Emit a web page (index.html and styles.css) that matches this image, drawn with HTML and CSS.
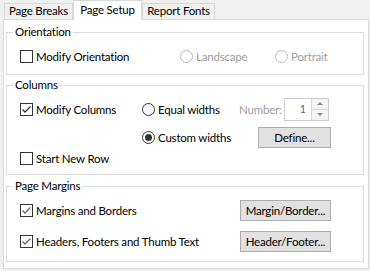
FILE: index.html
```html
<!DOCTYPE html>
<html>
<head>
    <title>Page Setup</title>
    <link rel="stylesheet" href="styles.css">
</head>
<body>
    <div class="tabs">
        <div class="tab tab-breaks">Page Breaks</div>
        <div class="tab tab-active">Page Setup</div>
        <div class="tab tab-fonts">Report Fonts</div>
    </div>
    <div class="panel">
        <div class="group group-orient">
            <div class="group-title">Orientation</div>
            <div class="row">
                <label class="opt w-orient"><span class="box"></span>Modify Orientation</label>
                <label class="opt w-land disabled"><span class="radio"></span>Landscape</label>
                <label class="opt disabled"><span class="radio"></span>Portrait</label>
            </div>
        </div>

        <div class="group group-cols">
            <div class="group-title">Columns</div>
            <div class="row">
                <label class="opt w-cols"><span class="box checked"><svg width="11" height="11" viewBox="0 0 11 11"><path d="M1.5 5.5 L4 8 L9.5 2.5" /></svg></span>Modify Columns</label>
                <label class="opt w-equal"><span class="radio"></span>Equal widths</label>
                <span class="num-label">Number:</span>
                <div class="spin">
                    <span class="spin-val">1</span>
                    <span class="spin-btns">
                        <span class="spin-up"></span>
                        <span class="spin-down"></span>
                    </span>
                </div>
            </div>
            <div class="row row-custom">
                <label class="opt w-custom"><span class="radio selected"></span>Custom widths</label>
                <button class="btn btn-define">Define...</button>
            </div>
            <div class="row row-short">
                <label class="opt"><span class="box"></span>Start New Row</label>
            </div>
        </div>

        <div class="group group-margins">
            <div class="group-title">Page Margins</div>
            <div class="row">
                <label class="opt w-margin"><span class="box checked light"><svg width="11" height="11" viewBox="0 0 11 11"><path d="M1.5 5.5 L4 8 L9.5 2.5" /></svg></span>Margins and Borders</label>
                <button class="btn btn-wide">Margin/Border...</button>
            </div>
            <div class="row row-second">
                <label class="opt w-margin"><span class="box checked light"><svg width="11" height="11" viewBox="0 0 11 11"><path d="M1.5 5.5 L4 8 L9.5 2.5" /></svg></span>Headers, Footers and Thumb Text</label>
                <button class="btn btn-wide">Header/Footer...</button>
            </div>
        </div>
    </div>
</body>
</html>
```

FILE: styles.css
```css
/* window frame */
body {
    margin: 0;
    width: 370px;
    height: 271px;
    background: #f0f0f0;
    font-family: Lato, "Noto Sans", sans-serif;
    font-size: 11.5px;
    letter-spacing: -0.2px;
    color: #000;
    overflow: hidden;
}

/* tab strip */
.tabs {
    display: flex;
    align-items: flex-end;
    height: 20px;
    padding-left: 4px;
    position: relative;
    z-index: 1;
    white-space: nowrap;
}

.tab {
    box-sizing: border-box;
    height: 16px;
    line-height: 14px;
    border: 1px solid #d9d9d9;
    border-bottom: none;
    background: #f0f0f0;
    text-align: center;
    margin-bottom: 1px;
}

.tab-breaks {
    width: 69px;
}

.tab-active {
    width: 69px;
    height: 20px;
    line-height: 17px;
    margin-bottom: 0;
    background: #fff;
}

.tab-fonts {
    width: 73px;
}

/* tab page */
.panel {
    box-sizing: border-box;
    width: 366px;
    margin: -1px 0 0 3px;
    padding: 12px 4px 6px 2px;
    background: #fff;
    border: 1px solid #d9d9d9;
}

.group {
    border: 1px solid #dcdcdc;
}

.group-title {
    display: table;
    height: 14px;
    line-height: 14px;
    margin: -8px 0 0 6px;
    padding: 0 2px;
    background: #fff;
}

.group-orient {
    padding-bottom: 7px;
}

.group-cols {
    margin-top: 10px;
    padding-bottom: 6px;
}

.group-margins {
    margin-top: 11px;
    padding-bottom: 9px;
}

.row {
    display: flex;
    align-items: center;
    height: 22px;
    margin-top: 6px;
    padding-left: 13px;
    white-space: nowrap;
}

.row-custom {
    padding-left: 135px;
}

.row-short {
    height: 20px;
    margin-top: 0;
}

.row-second {
    margin-top: 9px;
}

/* check boxes and radio buttons */
.opt {
    display: flex;
    align-items: center;
    gap: 3px;
}

.w-orient { width: 160px; }
.w-land { width: 95px; }
.w-cols { width: 122px; }
.w-equal { width: 97px; }
.w-custom { width: 116px; }
.w-margin { width: 220px; }

.disabled {
    color: #a0a0a0;
}

.box {
    box-sizing: border-box;
    width: 13px;
    height: 13px;
    border: 1px solid #333;
    background: #fff;
    display: flex;
    align-items: center;
    justify-content: center;
}

.box svg path {
    fill: none;
    stroke: #333;
    stroke-width: 1.3;
}

.box.light svg path {
    stroke: #6a6a6a;
}

.radio {
    box-sizing: border-box;
    width: 13px;
    height: 13px;
    border: 1px solid #333;
    border-radius: 50%;
    background: #fff;
    display: flex;
    align-items: center;
    justify-content: center;
}

.disabled .radio {
    border-color: #bcbcbc;
}

.radio.selected::after {
    content: "";
    width: 7px;
    height: 7px;
    border-radius: 50%;
    background: #333;
}

/* number spinner */
.num-label {
    width: 45px;
    color: #a0a0a0;
}

.spin {
    box-sizing: border-box;
    display: flex;
    width: 45px;
    height: 23px;
    border: 1px solid #cccccc;
    background: #fff;
}

.spin-val {
    flex: 1;
    text-align: right;
    padding-right: 5px;
    line-height: 20px;
    color: #6d6d6d;
}

.spin-btns {
    width: 16px;
    display: flex;
    flex-direction: column;
    border-left: 1px solid #d9d9d9;
}

.spin-up,
.spin-down {
    flex: 1;
    background: #f4f4f4;
    display: flex;
    align-items: center;
    justify-content: center;
}

.spin-up {
    border-bottom: 1px solid #d9d9d9;
}

.spin-up::after {
    content: "";
    border: 3px solid transparent;
    border-top: none;
    border-bottom: 3px solid #8a8a8a;
}

.spin-down::after {
    content: "";
    border: 3px solid transparent;
    border-bottom: none;
    border-top: 3px solid #8a8a8a;
}

/* push buttons */
.btn {
    box-sizing: border-box;
    height: 21px;
    padding: 0;
    font: inherit;
    letter-spacing: inherit;
    color: #000;
    background: #e1e1e1;
    border: 1px solid #adadad;
    border-radius: 0;
}

.btn-define {
    width: 73px;
}

.btn-wide {
    width: 91px;
}
```
